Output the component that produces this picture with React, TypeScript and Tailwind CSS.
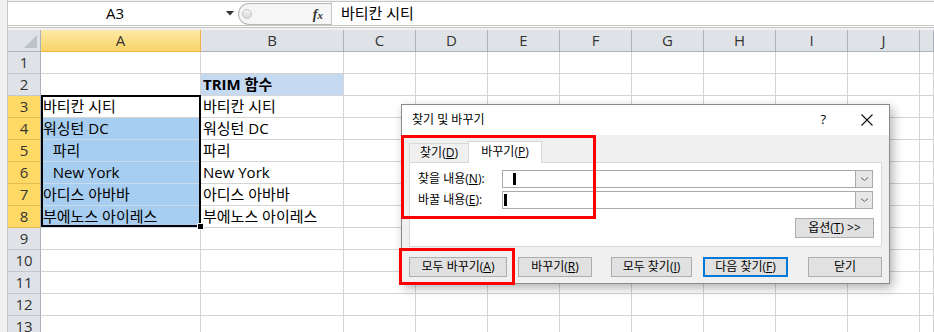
import React from "react";

const F = "font-['Open_Sans','Noto_Sans_CJK_KR',sans-serif]";

const colW = ["w-[160px]", "w-[143px]", "w-[72px]", "w-[72px]", "w-[72px]", "w-[72px]", "w-[72px]", "w-[72px]", "w-[72px]", "w-[72px]", "flex-1"];
const letters = ["A", "B", "C", "D", "E", "F", "G", "H", "I", "J", ""];

type Row = { a?: string; b?: string; aIndent?: boolean; bBold?: boolean };
const rows: Row[] = [
  {},
  { b: "TRIM 함수", bBold: true },
  { a: "바티칸 시티", b: "바티칸 시티" },
  { a: "워싱턴 DC", b: "워싱턴 DC" },
  { a: "  파리", b: "파리", aIndent: true },
  { a: "  New York", b: "New York", aIndent: true },
  { a: "아디스 아바바", b: "아디스 아바바" },
  { a: "부에노스 아이레스", b: "부에노스 아이레스" },
  {}, {}, {}, {}, {},
];

function Chevron() {
  return (
    <svg width="9" height="6" viewBox="0 0 9 6">
      <path d="M1 1.5 L4.5 4.5 L8 1.5" fill="none" stroke="#606060" strokeWidth="1" />
    </svg>
  );
}

function Combo({ caretLeft }: { caretLeft: string }) {
  return (
    <div className="flex h-[18px] w-[371px] border border-[#a9a9a9] bg-white">
      <div className="flex flex-1 items-center">
        <div className={`${caretLeft} h-[12px] w-[3px] bg-black`} />
      </div>
      <div className="flex w-[17px] items-center justify-center border-l border-[#a9a9a9] bg-[#e6e6e6]">
        <Chevron />
      </div>
    </div>
  );
}

function Btn({ w, children, primary }: { w: string; children: React.ReactNode; primary?: boolean }) {
  return (
    <div
      className={`${w} flex h-[20px] items-center justify-center bg-[#e1e1e1] text-[12px] text-black ${
        primary ? "border-2 border-[#0078d7]" : "border border-[#adadad]"
      }`}
    >
      {children}
    </div>
  );
}

export default function App() {
  return (
    <div className={`relative flex h-[332px] w-[934px] overflow-hidden bg-white ${F}`}>
      {/* left strip */}
      <div className="h-full w-[8px] border-r border-[#c6c6c6] bg-[#f0f0f0]" />

      <div className="flex flex-1 flex-col">
        {/* formula bar */}
        <div className="flex h-[30px] flex-col bg-[#f0f0f0]">
          <div className="h-[1px]" />
          <div className="flex h-[24px] border-t border-[#c6c6c6] bg-white">
            <div className="flex w-[214px] items-center justify-center text-[15px] text-black">A3</div>
            <div className="flex w-[16px] items-center justify-center">
              <svg width="8" height="5" viewBox="0 0 8 5">
                <path d="M0 0 H8 L4 4.5 Z" fill="#333" />
              </svg>
            </div>
            <div className="mt-[1px] flex h-[22px] w-[93px] items-center rounded-l-full border-y border-l border-[#b8b8b8] bg-[#f6f6f6]">
              <div className="ml-[3px] h-[10px] w-[10px] rounded-full border border-[#c4c4c4] bg-[linear-gradient(#f4f4f4,#d8d8d8)]" />
              <div className="flex-1" />
              <span className="mr-[8px] font-['Liberation_Serif',serif] text-[14px] font-bold italic text-[#333]">
                f<span className="text-[11px]">x</span>
              </span>
            </div>
            <div className="flex flex-1 items-center border-l border-[#c6c6c6] pl-[9px] text-[15px] text-black">
              바티칸 시티
            </div>
          </div>
          <div className="h-[1px] bg-[#c6c6c6]" />
          <div className="h-[1px] bg-white" />
          <div className="h-[1px] bg-[#c6c6c6]" />
          <div className="h-[2px]" />
        </div>

        {/* header row */}
        <div className="flex h-[22px]">
          <div className="flex w-[33px] items-end justify-end border-r border-b border-[#abb2bc] bg-[#dfe3e8] pb-[3px] pr-[3px]">
            <svg width="13" height="13" viewBox="0 0 13 13">
              <path d="M13 0 V13 H0 Z" fill="#bcc2ca" />
            </svg>
          </div>
          {letters.map((l, i) => (
            <div
              key={i}
              className={`${colW[i]} flex items-center justify-center border-r border-b text-[15px] ${
                i === 0
                  ? "border-[#f0b447] bg-[linear-gradient(#fdeaa8,#f9d466)] text-[#333]"
                  : "border-[#abb2bc] bg-[#dfe3e8] text-[#333]"
              }`}
            >
              {l}
            </div>
          ))}
        </div>

        {/* data rows */}
        {rows.map((r, ri) => {
          const n = ri + 1;
          const sel = n >= 3 && n <= 8;
          const blue = n >= 4 && n <= 8;
          return (
            <div key={ri} className="flex h-[22px] shrink-0">
              <div
                className={`flex w-[33px] items-center justify-center border-r border-b text-[15px] text-[#333] ${
                  sel ? "border-r-[#abb2bc] border-b-[#e6bd55] bg-[#ffd966]" : "border-[#c3c8cf] border-r-[#abb2bc] bg-[#dfe3e8]"
                }`}
              >
                {n}
              </div>
              <div
                className={`${colW[0]} flex items-center whitespace-pre border-r border-b pl-[2px] text-[15px] text-black ${
                  blue ? "border-[#c9dcee] bg-[#a7cdf0]" : "border-[#d4d4d4]"
                } ${r.aIndent ? "pl-[4px]" : ""}`}
              >
                {r.a ?? ""}
              </div>
              <div
                className={`${colW[1]} flex items-center whitespace-pre border-r border-b border-[#d4d4d4] pl-[2px] text-[15px] text-black ${
                  r.bBold ? "bg-[#c5d9f1] font-bold" : ""
                }`}
              >
                {r.b ?? ""}
              </div>
              {colW.slice(2).map((w, ci) => (
                <div key={ci} className={`${w} border-r border-b border-[#d4d4d4]`} />
              ))}
            </div>
          );
        })}
      </div>

      {/* selection border */}
      <div className="absolute left-[41px] top-[95px] h-[132px] w-[160px] border-2 border-black" />
      <div className="absolute left-[197px] top-[223px] h-[7px] w-[7px] border border-white bg-black" />

      {/* dialog */}
      <div className="absolute left-[401px] top-[104px] flex h-[180px] w-[489px] flex-col border border-[#8a8a8a] bg-[#f0f0f0] text-[12px] text-black shadow-[3px_4px_10px_rgba(0,0,0,0.3)]">
        <div className="flex h-[30px] items-center bg-white pl-[10px]">
          <span>찾기 및 바꾸기</span>
          <div className="flex-1" />
          <span className="mr-[35px] text-[13px]">?</span>
          <svg className="mr-[16px]" width="12" height="12" viewBox="0 0 12 12">
            <path d="M0.5 0.5 L11.5 11.5 M11.5 0.5 L0.5 11.5" stroke="#111" strokeWidth="1.1" />
          </svg>
        </div>
        <div className="flex flex-1 flex-col px-[7px] pt-[6px]">
          <div className="flex h-[21px] items-end">
            <div className="flex h-[19px] w-[59px] items-center justify-center border-l border-t border-[#d9d9d9]">
              찾기(<span className="underline">D</span>)
            </div>
            <div className="relative z-10 -mb-px flex h-[22px] w-[74px] items-center justify-center border-x border-t border-[#d9d9d9] bg-white pb-[1px]">
              바꾸기(<span className="underline">P</span>)
            </div>
          </div>
          <div className="flex h-[85px] flex-col border border-[#d9d9d9] bg-white pt-[7px]">
            <div className="flex h-[18px] items-center">
              <div className="w-[92px] pl-[8px]">
                찾을 내용(<span className="underline">N</span>):
              </div>
              <Combo caretLeft="ml-[10px]" />
            </div>
            <div className="mt-[3px] flex h-[18px] items-center">
              <div className="w-[92px] pl-[8px]">
                바꿀 내용(<span className="underline">E</span>):
              </div>
              <Combo caretLeft="ml-[1px]" />
            </div>
            <div className="mt-[9px] flex justify-end pr-[7px]">
              <Btn w="w-[79px]">
                옵션(<span className="underline">T</span>) &gt;&gt;
              </Btn>
            </div>
          </div>
          <div className="mt-[10px] flex">
            <Btn w="w-[98px]">
              모두 바꾸기(<span className="underline">A</span>)
            </Btn>
            <div className="w-[11px]" />
            <Btn w="w-[74px]">
              바꾸기(<span className="underline">R</span>)
            </Btn>
            <div className="w-[19px]" />
            <Btn w="w-[81px]">
              모두 찾기(<span className="underline">I</span>)
            </Btn>
            <div className="w-[11px]" />
            <Btn w="w-[85px]" primary>
              다음 찾기(<span className="underline">F</span>)
            </Btn>
            <div className="w-[20px]" />
            <Btn w="w-[74px]">닫기</Btn>
          </div>
        </div>
      </div>

      {/* red highlight boxes */}
      <div className="absolute left-[401px] top-[135px] h-[84px] w-[195px] border-[3px] border-[#ff0000]" />
      <div className="absolute left-[399px] top-[248px] h-[37px] w-[116px] border-[3px] border-[#ff0000]" />
    </div>
  );
}
